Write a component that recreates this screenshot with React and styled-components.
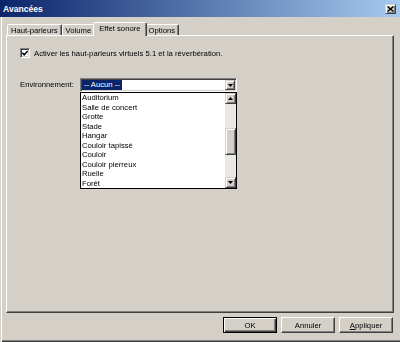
import React from 'react';
import styled, { createGlobalStyle } from 'styled-components';

const Global = createGlobalStyle`
  html, body { margin: 0; padding: 0; background: #d4d0c8; }
  body { font-family: "Liberation Sans", Arial, sans-serif; }
`;

const grayText = `filter: grayscale(1);`;

const Window = styled.div`
  width: 400px;
  height: 342px;
  display: flex;
  flex-direction: column;
  background: #d4d0c8;
  font-family: "Liberation Sans", Arial, sans-serif;
  font-size: 7.7px;
  color: #000;
  overflow: hidden;
`;

const TitleBar = styled.div`
  height: 17px;
  flex: none;
  display: flex;
  align-items: center;
  justify-content: space-between;
  padding: 0 4px 0 3px;
  background: linear-gradient(to right, #0a246a, #a6caf0);
`;

const Title = styled.span`
  color: #fff;
  font-weight: bold;
  font-size: 8.6px;
`;

const raised = `
  border: 1px solid;
  border-color: #d4d0c8 #404040 #404040 #d4d0c8;
  box-shadow: inset 1px 1px #fff, inset -1px -1px #808080;
  background: #d4d0c8;
`;

const CloseBtn = styled.div`
  box-sizing: border-box;
  width: 11px;
  height: 10px;
  ${raised}
  display: flex;
  align-items: center;
  justify-content: center;
`;

const Body = styled.div`
  flex: 1;
  display: flex;
  flex-direction: column;
  padding: 5px 6px 9px 6px;
  box-shadow: inset 1px 0 #d4d0c8, inset 2px 0 #fff, inset 0 -1px #404040, inset 0 -2px #808080;
`;

const TabStrip = styled.div`
  height: 13px;
  flex: none;
  display: flex;
  align-items: flex-end;
  padding-left: 1px;
  position: relative;
  z-index: 1;
`;

const Tab = styled.div`
  box-sizing: border-box;
  height: ${p => (p.$active ? 14 : 11)}px;
  padding: 0 ${p => (p.$active ? 5 : 3)}px ${p => (p.$active ? 2 : 0)}px;
  margin: ${p => (p.$active ? '0 -2px -1px' : '0')};
  border: 1px solid;
  border-bottom: none;
  border-color: #fff #404040 transparent #fff;
  box-shadow: inset -1px 0 #808080;
  border-radius: 2px 2px 0 0;
  display: flex;
  align-items: center;
  background: #d4d0c8;
  white-space: nowrap;
  position: relative;
  z-index: ${p => (p.$active ? 2 : 1)};
`;

const TabText = styled.span`
  ${grayText}
`;

const Panel = styled.div`
  flex: 1;
  box-sizing: border-box;
  border: 1px solid;
  border-color: #fff #404040 #404040 #fff;
  box-shadow: inset -1px -1px #808080;
  padding: 12px 12px 0 13px;
  display: flex;
  flex-direction: column;
`;

const CheckRow = styled.label`
  display: flex;
  align-items: center;
  gap: 4px;
  height: 10px;
`;

const CheckText = styled.span`
  white-space: nowrap;
  ${grayText}
`;

const sunken = `
  border: 1px solid;
  border-color: #808080 #fff #fff #808080;
  box-shadow: inset 1px 1px #404040, inset -1px -1px #d4d0c8;
  background: #fff;
`;

const CheckBox = styled.span`
  box-sizing: border-box;
  width: 10px;
  height: 10px;
  ${sunken}
  display: flex;
  align-items: center;
  justify-content: center;
`;

const EnvRow = styled.div`
  display: flex;
  align-items: flex-start;
  margin-top: 20px;
`;

const Label = styled.span`
  width: 60px;
  line-height: 14px;
  white-space: nowrap;
  ${grayText}
`;

const ComboWrap = styled.div`
  position: relative;
  width: 157px;
`;

const Combo = styled.div`
  box-sizing: border-box;
  height: 14px;
  ${sunken}
  padding: 1px;
  display: flex;
  align-items: center;
  justify-content: space-between;
`;

const Selected = styled.span`
  background: #0a246a;
  color: #fff;
  height: 10px;
  line-height: 10px;
  padding: 0 2px;
  white-space: nowrap;
`;

const ArrowBtn = styled.div`
  box-sizing: border-box;
  flex: none;
  width: ${p => p.$w || 10}px;
  height: ${p => p.$h || 10}px;
  ${raised}
  display: flex;
  align-items: center;
  justify-content: center;
`;

const DropList = styled.div`
  position: absolute;
  top: 100%;
  left: 0;
  width: 157px;
  height: 97px;
  box-sizing: border-box;
  border: 1px solid #000;
  background: #fff;
  display: flex;
`;

const Items = styled.div`
  flex: 1;
  padding-left: 1px;
  line-height: 9.5px;
  ${grayText}
`;

const Item = styled.div`
  height: 9.5px;
  white-space: nowrap;
`;

const ScrollBar = styled.div`
  width: 11px;
  display: flex;
  flex-direction: column;
`;

const Track = styled.div`
  flex: 1;
  background: #eae8e4;
  display: flex;
  flex-direction: column;
`;

const Thumb = styled.div`
  box-sizing: border-box;
  margin-top: 24px;
  height: 27px;
  ${raised}
`;

const ButtonRow = styled.div`
  display: flex;
  justify-content: flex-end;
  gap: 4px;
  margin-top: 4px;
  padding-right: 1px;
`;

const Button = styled.div`
  box-sizing: border-box;
  width: 54px;
  height: 16px;
  display: flex;
  align-items: center;
  justify-content: center;
  background: #d4d0c8;
  border: 1px solid;
  ${p =>
    p.$default
      ? `border-color: #000;
         box-shadow: inset 1px 1px #fff, inset -1px -1px #404040, inset -2px -2px #808080;`
      : `border-color: #fff #404040 #404040 #fff;
         box-shadow: inset -1px -1px #808080;`}
`;

const ButtonText = styled.span`
  ${grayText}
`;

const Mnemonic = styled.span`
  text-decoration: underline;
`;

const Down = () => (
  <svg width="5" height="3" viewBox="0 0 5 3"><polygon points="0,0 5,0 2.5,3" fill="#000" /></svg>
);
const Up = () => (
  <svg width="5" height="3" viewBox="0 0 5 3"><polygon points="0,3 5,3 2.5,0" fill="#000" /></svg>
);

const items = [
  'Auditorium',
  'Salle de concert',
  'Grotte',
  'Stade',
  'Hangar',
  'Couloir tapissé',
  'Couloir',
  'Couloir pierreux',
  'Ruelle',
  'Forêt',
];

export default function App() {
  return (
    <>
      <Global />
      <Window>
        <TitleBar>
          <Title>Avancées</Title>
          <CloseBtn>
            <svg width="7" height="6" viewBox="0 0 7 6">
              <path d="M0.5 0.5 L6.5 5.5 M6.5 0.5 L0.5 5.5" stroke="#000" strokeWidth="1.4" />
            </svg>
          </CloseBtn>
        </TitleBar>
        <Body>
          <TabStrip>
            <Tab><TabText>Haut-parleurs</TabText></Tab>
            <Tab><TabText>Volume</TabText></Tab>
            <Tab $active><TabText>Effet sonore</TabText></Tab>
            <Tab><TabText>Options</TabText></Tab>
          </TabStrip>
          <Panel>
            <CheckRow>
              <CheckBox>
                <svg width="6" height="6" viewBox="0 0 6 6">
                  <polyline points="0.3,2.8 2.2,4.8 5.7,1" fill="none" stroke="#000" strokeWidth="1.5" />
                </svg>
              </CheckBox>
              <CheckText>Activer les haut-parleurs virtuels 5.1 et la réverbération.</CheckText>
            </CheckRow>
            <EnvRow>
              <Label>Environnement:</Label>
              <ComboWrap>
                <Combo>
                  <Selected>-- Aucun --</Selected>
                  <ArrowBtn><Down /></ArrowBtn>
                </Combo>
                <DropList>
                  <Items>
                    {items.map(it => (
                      <Item key={it}>{it}</Item>
                    ))}
                  </Items>
                  <ScrollBar>
                    <ArrowBtn $w={11} $h={11}><Up /></ArrowBtn>
                    <Track>
                      <Thumb />
                    </Track>
                    <ArrowBtn $w={11} $h={11}><Down /></ArrowBtn>
                  </ScrollBar>
                </DropList>
              </ComboWrap>
            </EnvRow>
          </Panel>
          <ButtonRow>
            <Button $default><ButtonText>OK</ButtonText></Button>
            <Button><ButtonText>Annuler</ButtonText></Button>
            <Button><ButtonText><Mnemonic>A</Mnemonic>ppliquer</ButtonText></Button>
          </ButtonRow>
        </Body>
      </Window>
    </>
  );
}
